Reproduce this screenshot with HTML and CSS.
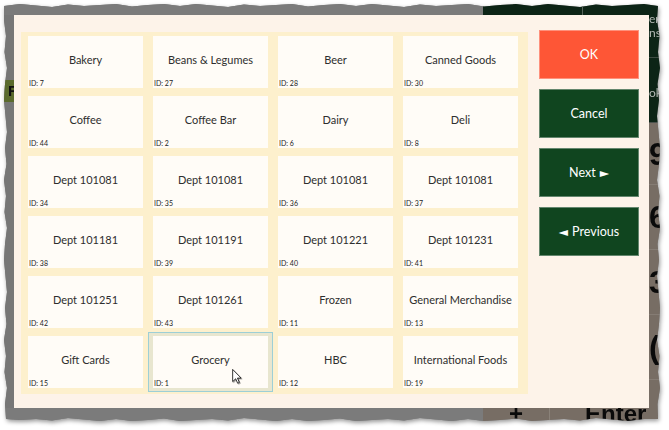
FILE: index.html
```html
<!DOCTYPE html>
<html>
<head>
<meta charset="utf-8">
<link rel="stylesheet" href="styles.css">
</head>
<body>
<div class="wrap">
  <div class="frame">
    <div class="topbar">
      <div class="tb-gray"></div>
      <div class="tb-green a"></div>
      <div class="tb-green b"></div>
    </div>
    <div class="middle">
      <div class="lstrip"><div class="olive">R</div></div>
      <div class="dialog">
        <div class="panel">
          <div class="cell"><div class="tile"><div class="label">Bakery</div><div class="id">ID: 7</div></div></div>
          <div class="cell"><div class="tile"><div class="label">Beans &amp; Legumes</div><div class="id">ID: 27</div></div></div>
          <div class="cell"><div class="tile"><div class="label">Beer</div><div class="id">ID: 28</div></div></div>
          <div class="cell"><div class="tile"><div class="label">Canned Goods</div><div class="id">ID: 30</div></div></div>

          <div class="cell"><div class="tile"><div class="label">Coffee</div><div class="id">ID: 44</div></div></div>
          <div class="cell"><div class="tile"><div class="label">Coffee Bar</div><div class="id">ID: 2</div></div></div>
          <div class="cell"><div class="tile"><div class="label">Dairy</div><div class="id">ID: 6</div></div></div>
          <div class="cell"><div class="tile"><div class="label">Deli</div><div class="id">ID: 8</div></div></div>

          <div class="cell"><div class="tile"><div class="label">Dept 101081</div><div class="id">ID: 34</div></div></div>
          <div class="cell"><div class="tile"><div class="label">Dept 101081</div><div class="id">ID: 35</div></div></div>
          <div class="cell"><div class="tile"><div class="label">Dept 101081</div><div class="id">ID: 36</div></div></div>
          <div class="cell"><div class="tile"><div class="label">Dept 101081</div><div class="id">ID: 37</div></div></div>

          <div class="cell"><div class="tile"><div class="label">Dept 101181</div><div class="id">ID: 38</div></div></div>
          <div class="cell"><div class="tile"><div class="label">Dept 101191</div><div class="id">ID: 39</div></div></div>
          <div class="cell"><div class="tile"><div class="label">Dept 101221</div><div class="id">ID: 40</div></div></div>
          <div class="cell"><div class="tile"><div class="label">Dept 101231</div><div class="id">ID: 41</div></div></div>

          <div class="cell"><div class="tile"><div class="label">Dept 101251</div><div class="id">ID: 42</div></div></div>
          <div class="cell"><div class="tile"><div class="label">Dept 101261</div><div class="id">ID: 43</div></div></div>
          <div class="cell"><div class="tile"><div class="label">Frozen</div><div class="id">ID: 11</div></div></div>
          <div class="cell"><div class="tile"><div class="label">General Merchandise</div><div class="id">ID: 13</div></div></div>

          <div class="cell"><div class="tile"><div class="label">Gift Cards</div><div class="id">ID: 15</div></div></div>
          <div class="cell sel"><div class="tile"><div class="label">Grocery</div><div class="id">ID: 1</div></div>
            <svg class="cursor" width="10" height="15" viewBox="0 0 12 19"><path d="M0.5 0.5 L0.5 16 L4.3 12.4 L6.8 18 L9 17 L6.6 11.5 L11.3 11.5 Z" fill="#fff" stroke="#000" stroke-width="1" stroke-linejoin="round"/></svg>
          </div>
          <div class="cell"><div class="tile"><div class="label">HBC</div><div class="id">ID: 12</div></div></div>
          <div class="cell"><div class="tile"><div class="label">International Foods</div><div class="id">ID: 19</div></div></div>
        </div>
        <div class="buttons">
          <div class="btn ok">OK</div>
          <div class="btn dark">Cancel</div>
          <div class="btn dark"><span>Next</span><span class="tri">►</span></div>
          <div class="btn dark"><span class="tri">◄</span><span>Previous</span></div>
        </div>
      </div>
      <div class="rstrip">
        <div class="gbox one"><span>er</span><span>ns</span></div>
        <div class="gbox two"><span>ok</span></div>
        <div class="keys">
          <div class="key first">9</div>
          <div class="key">6</div>
          <div class="key">3</div>
          <div class="key">(</div>
          <div class="key last"></div>
        </div>
      </div>
    </div>
    <div class="botbar">
      <div class="bb-gray"></div>
      <div class="bb-key plus"><span>+</span></div>
      <div class="bb-key enter"><span>Enter</span></div>
    </div>
  </div>
</div>
</body>
</html>
```
FILE: styles.css
```css
html, body {
  margin: 0;
  background: #ffffff;
}
body {
  padding: 4px;
  width: 669px;
  height: 430px;
  box-sizing: border-box;
  overflow: hidden;
}
.wrap {
  width: 656px;
  height: 417px;
  filter: drop-shadow(1px 2px 2px rgba(0, 0, 0, 0.4));
}
.frame {
  width: 656px;
  height: 417px;
  display: flex;
  flex-direction: column;
  background: #7a7a7a;
  overflow: hidden;
  font-family: Lato, "DejaVu Sans", sans-serif;
  clip-path: polygon(0 2px, 16px 0, 32px 1.5px, 48px 3px, 64px .5px, 80px 2px, 96px 1px, 112px 0, 128px 2.5px, 144px 1px, 160px 0, 176px 2px, 192px 0, 208px 1.5px, 224px 3px, 240px .5px, 256px 2px, 272px 1px, 288px 0, 304px 2.5px, 320px 1px, 336px 0, 352px 2px, 368px 0, 384px 1.5px, 400px 3px, 416px .5px, 432px 2px, 448px 1px, 464px 0, 480px 2.5px, 496px 1px, 512px 0, 528px 2px, 544px 0, 560px 1.5px, 576px 3px, 592px .5px, 608px 2px, 624px 1px, 640px 0, 654px 2px,
    653px 16px, 655.5px 32px, 654px 48px, 656px 64px, 653.5px 80px, 655px 96px, 653px 112px, 654.5px 128px, 656px 144px, 655px 160px, 653px 176px, 655.5px 192px, 654px 208px, 656px 224px, 653.5px 240px, 655px 256px, 653px 272px, 654.5px 288px, 656px 304px, 655px 320px, 653px 336px, 655.5px 352px, 654px 368px, 656px 384px, 653.5px 400px, 654px 415px,
    640px 415px, 624px 417px, 608px 415.5px, 592px 414px, 576px 416.5px, 560px 415px, 544px 416px, 528px 417px, 512px 414.5px, 496px 416px, 480px 417px, 464px 415px, 448px 417px, 432px 415.5px, 416px 414px, 400px 416.5px, 384px 415px, 368px 416px, 352px 417px, 336px 414.5px, 320px 416px, 304px 417px, 288px 415px, 272px 417px, 256px 415.5px, 240px 414px, 224px 416.5px, 208px 415px, 192px 416px, 176px 417px, 160px 414.5px, 144px 416px, 128px 417px, 112px 415px, 96px 417px, 80px 415.5px, 64px 414px, 48px 416.5px, 32px 415px, 16px 416px, 2px 415px,
    1px 400px, 3px 384px, .5px 368px, 2px 352px, 0 336px, 2.5px 320px, 1px 304px, 3px 288px, 1.5px 272px, 0 256px, 1px 240px, 3px 224px, .5px 208px, 2px 192px, 0 176px, 2.5px 160px, 1px 144px, 3px 128px, 1.5px 112px, 0 96px, 1px 80px, 3px 64px, .5px 48px, 2px 32px, 0 16px);
}

/* background application (partly hidden) */
.topbar {
  height: 11px;
  flex: none;
  display: flex;
}
.tb-gray {
  width: 479px;
  background: #7b7b7b;
}
.tb-green {
  background: #0c2416;
}
.tb-green.a {
  width: 99px;
  border-right: 1px solid #56645b;
}
.tb-green.b {
  flex: 1;
}
.middle {
  height: 393px;
  flex: none;
  display: flex;
}
.lstrip {
  width: 10px;
  flex: none;
  background: #777777;
  padding-top: 65px;
  box-sizing: border-box;
  overflow: hidden;
}
.olive {
  height: 22px;
  background: #5b6b2d;
  color: #111;
  font: bold 15px/22px "Liberation Sans", sans-serif;
  padding-left: 4px;
  white-space: nowrap;
}
.rstrip {
  width: 11px;
  flex: none;
  display: flex;
  flex-direction: column;
  overflow: hidden;
}
.gbox {
  background: #0c2416;
  color: #b4b9b5;
  font-size: 12px;
  line-height: 14px;
  display: flex;
  flex-direction: column;
  white-space: nowrap;
  overflow: hidden;
}
.gbox.one {
  height: 43px;
  border-bottom: 1px solid #3d4c42;
  box-sizing: border-box;
}
.gbox.one span:first-child {
  margin-top: -3px;
}
.gbox.two {
  height: 65px;
  padding-top: 28px;
  box-sizing: border-box;
  border-bottom: 1px solid #4a514c;
}
.keys {
  flex: 1;
  background: #776d64;
  display: flex;
  flex-direction: column;
}
.key {
  height: 65px;
  flex: none;
  box-sizing: border-box;
  border-bottom: 1px solid #857c74;
  display: flex;
  align-items: center;
  font: bold 32px/32px "Liberation Sans", sans-serif;
  color: #0a0a0a;
  overflow: hidden;
}
.key.first {
  height: 62px;
}
.key.last {
  flex: 1;
  border-bottom: none;
}
.botbar {
  height: 13px;
  flex: none;
  display: flex;
  overflow: hidden;
}
.bb-gray {
  width: 479px;
  background: #7b7b7b;
}
.bb-key {
  background: #776d64;
  font: bold 24px/24px "Liberation Sans", sans-serif;
  color: #0a0a0a;
  overflow: hidden;
  white-space: nowrap;
}
.bb-key span {
  display: block;
  margin-top: -6px;
}
.plus {
  width: 66px;
  border-right: 1px solid #8a8279;
  text-align: center;
}
.enter {
  flex: 1;
  padding-left: 35px;
}

/* dialog */
.dialog {
  width: 635px;
  flex: none;
  background: #fdf3e9;
  display: flex;
  align-items: flex-start;
  gap: 11px;
  padding: 15px 10px 0 7px;
  box-sizing: border-box;
}
.panel {
  margin-top: 2px;
  padding: 0 5px 2px 2px;
  background: #fdf0cd;
  display: grid;
  grid-template-columns: repeat(4, 125px);
  grid-template-rows: repeat(6, 60px);
}
.cell {
  padding: 4px 5px;
  box-sizing: border-box;
}
.cell.sel {
  position: relative;
  border: 1px solid #9dcfd6;
  background: #e8e6cf;
  padding: 3px 4px;
}
.tile {
  height: 52px;
  background: #fffcf7;
  display: flex;
  flex-direction: column;
}
.label {
  flex: 1;
  display: flex;
  align-items: center;
  justify-content: center;
  padding-top: 4px;
  font-size: 11px;
  color: #2e2e2e;
  white-space: nowrap;
}
.id {
  height: 8px;
  padding: 0 0 1px 1px;
  font-size: 7px;
  line-height: 8px;
  color: #222222;
}
.cursor {
  position: absolute;
  left: 83px;
  top: 36px;
  filter: drop-shadow(1px 1px 0.6px rgba(0, 0, 0, 0.35));
}
.buttons {
  width: 100px;
  flex: none;
  display: flex;
  flex-direction: column;
  gap: 10px;
}
.btn {
  height: 49px;
  box-sizing: border-box;
  border: 1px solid rgba(255, 255, 255, 0.35);
  color: #ffffff;
  font-size: 12.5px;
  display: flex;
  align-items: center;
  justify-content: center;
  gap: 4px;
}
.btn.ok {
  background: #fe5636;
}
.btn.dark {
  background: #10451f;
}
.tri {
  font-family: "DejaVu Sans", sans-serif;
  font-size: 12px;
}
```
